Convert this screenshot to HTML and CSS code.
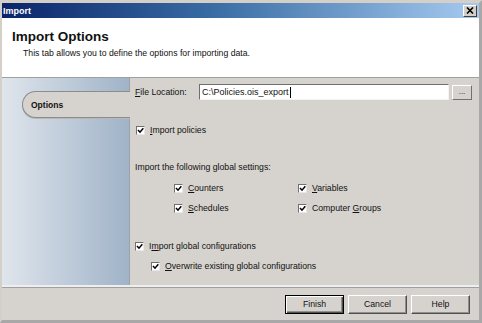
FILE: index.html
```html
<!DOCTYPE html>
<html lang="en">
  <head>
    <meta charset="UTF-8" />
    <title>Import</title>
    <link rel="stylesheet" href="styles.css">
  </head>
  <body>
    <div class="window">
      <div class="titlebar">
        <span class="title">Import</span>
        <span class="close">
          <svg width="8" height="7" viewBox="0 0 8 7"><path d="M1 0.5 L7 6.5 M7 0.5 L1 6.5" stroke="#000" stroke-width="1.6" /></svg>
        </span>
      </div>

      <header class="head">
        <h1>Import Options</h1>
        <p>This tab allows you to define the options for importing data.</p>
      </header>

      <div class="main">
        <aside class="side">
          <div class="tab">Options</div>
        </aside>

        <section class="opts">
          <div class="file_row">
            <span class="lbl"><u>F</u>ile Location:</span>
            <span class="field">C:\Policies.ois_export<i class="caret"></i></span>
            <span class="browse">...</span>
          </div>

          <label class="chk policies"><span class="box"></span><span><u>I</u>mport policies</span></label>

          <div class="heading">Import the following global settings:</div>

          <div class="grid">
            <label class="chk"><span class="box"></span><span><u>C</u>ounters</span></label>
            <label class="chk"><span class="box"></span><span><u>V</u>ariables</span></label>
            <label class="chk"><span class="box"></span><span><u>S</u>chedules</span></label>
            <label class="chk"><span class="box"></span><span>Computer <u>G</u>roups</span></label>
          </div>

          <label class="chk global"><span class="box"></span><span>I<u>m</u>port global configurations</span></label>
          <label class="chk overwrite"><span class="box"></span><span><u>O</u>verwrite existing global configurations</span></label>
        </section>
      </div>

      <footer class="foot">
        <span class="btn default">Finish</span>
        <span class="btn">Cancel</span>
        <span class="btn">Help</span>
      </footer>
    </div>
  </body>
</html>
```

FILE: styles.css
```css
* {
  box-sizing: border-box;
}
body {
  margin: 0;
  background: #d4d0c8;
  font-family: "Liberation Sans", Arial, sans-serif;
  font-size: 8.7px;
  color: #111;
}
.window {
  width: 482px;
  height: 323px;
  display: flex;
  flex-direction: column;
  background: #d6d3ce;
  border-top: 3px solid #d4d0c8;
  border-left: 2px solid #d4d0c8;
  border-right: 3px solid #a8a8a8;
  border-bottom: 3px solid #a8a8a8;
}
.titlebar {
  height: 15px;
  flex-shrink: 0;
  display: flex;
  align-items: center;
  justify-content: space-between;
  padding: 0 2px 0 1px;
  background: linear-gradient(to right, #0a246a, #3a6ea5 45%, #a6caf0);
}
.title {
  color: #fff;
  font-weight: bold;
  font-size: 9px;
}
.close {
  width: 14px;
  height: 12px;
  display: flex;
  align-items: center;
  justify-content: center;
  background: #d4d0c8;
  border: 1px solid;
  border-color: #fff #404040 #404040 #fff;
}
.head {
  height: 60px;
  flex-shrink: 0;
  background: #fff;
  border-bottom: 1px solid #a0a0a0;
  padding: 11px 0 0 10px;
}
.head h1 {
  margin: 0;
  font-size: 13.5px;
  line-height: 16px;
  font-weight: bold;
}
.head p {
  margin: 3px 0 0 11px;
  line-height: 10px;
}
.main {
  flex-grow: 1;
  display: flex;
  border-bottom: 2px solid #eeeeee;
  box-shadow: 0 1px 0 #a0a0a0;
}
.side {
  width: 128px;
  flex-shrink: 0;
  background: linear-gradient(to right, #dfe5ec, #a0b3c8);
  border-right: 1px solid #9aa3ad;
  padding: 13px 0 0 20px;
}
.tab {
  height: 27px;
  margin-right: -1px;
  display: flex;
  align-items: center;
  padding-left: 8px;
  background: #d6d3ce;
  border: 1px solid #8c8c8c;
  border-right: none;
  border-radius: 14px 0 0 14px;
  box-shadow: 0 1px 0 #b8b8b8;
  font-weight: bold;
  font-size: 8.5px;
}
.opts {
  flex-grow: 1;
  padding: 6px 7px 0 5px;
  display: flex;
  flex-direction: column;
  align-items: flex-start;
}
.file_row {
  width: 100%;
  display: flex;
  align-items: center;
  height: 16px;
}
.lbl {
  width: 64px;
  flex-shrink: 0;
}
.field {
  width: 250px;
  height: 16px;
  display: flex;
  align-items: center;
  padding-left: 2px;
  background: #fff;
  border: 1px solid;
  border-color: #6e6e6e #f4f4f4 #f4f4f4 #6e6e6e;
  font-size: 9px;
}
.caret {
  width: 1px;
  height: 11px;
  background: #000;
  margin-left: 1px;
}
.browse {
  width: 20px;
  height: 15px;
  margin-left: 3px;
  display: flex;
  align-items: flex-end;
  justify-content: center;
  padding-bottom: 3px;
  font-size: 8px;
  line-height: 8px;
  border: 1px solid;
  border-color: #fff #707070 #707070 #fff;
}
.chk {
  display: flex;
  align-items: center;
  height: 10px;
  line-height: 10px;
  white-space: nowrap;
}
.box {
  width: 9px;
  height: 9px;
  margin-right: 5px;
  flex-shrink: 0;
  background: #fff url("data:image/svg+xml,%3Csvg xmlns='http://www.w3.org/2000/svg' width='7' height='7'%3E%3Cpath d='M1 3 L3 5.2 L6.3 1.2' fill='none' stroke='%23000' stroke-width='1.5'/%3E%3C/svg%3E") center no-repeat;
  border: 1px solid;
  border-color: #707070 #e8e8e8 #e8e8e8 #707070;
}
.policies {
  margin: 25px 0 0 1px;
}
.heading {
  margin-top: 27px;
  line-height: 10px;
}
.grid {
  margin: 11px 0 0 39px;
  display: grid;
  grid-template-columns: 124px auto;
  row-gap: 10px;
}
.global {
  margin: 28px 0 0 0;
}
.overwrite {
  margin: 10px 0 0 16px;
}
.foot {
  height: 33px;
  flex-shrink: 0;
  display: flex;
  align-items: center;
  justify-content: flex-end;
  gap: 4px;
  padding: 1px 9px 0 0;
}
.btn {
  width: 59px;
  height: 19px;
  display: flex;
  align-items: center;
  justify-content: center;
  background: #d6d3ce;
  border: 1px solid;
  border-color: #fff #505050 #505050 #fff;
  box-shadow: inset -1px -1px 0 #909090;
}
.btn.default {
  border: 1px solid #000;
  box-shadow: inset 1px 1px 0 #fff, inset -1px -1px 0 #505050, inset -2px -2px 0 #909090;
}
```
